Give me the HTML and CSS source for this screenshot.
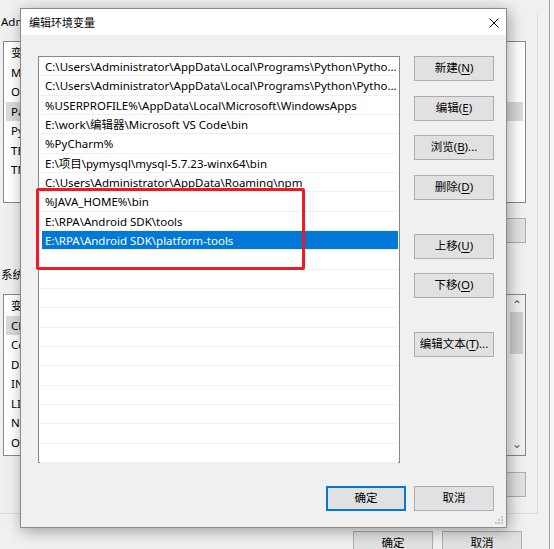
FILE: index.html
```html
<!DOCTYPE html>
<html lang="zh-CN">
<head>
	<meta charset="UTF-8">
	<title>编辑环境变量</title>
	<link rel="stylesheet" href="styles.css">
</head>
<body>

	<!-- 后面的"环境变量"窗口 -->
	<div class="owner">
		<div class="owner-frame">
			<div class="owner-label">Administrator 的用户变量(<u>U</u>)</div>
			<ul class="owner-list">
				<li class="owner-head">变量</li>
				<li>MOZ_PLUGIN_PATH</li>
				<li>OneDrive</li>
				<li class="active">Path</li>
				<li>PyCharm</li>
				<li>TEMP</li>
				<li>TMP</li>
			</ul>
			<div class="owner-btns">
				<button class="btn">新建(<u>N</u>)...</button>
				<button class="btn">编辑(<u>E</u>)...</button>
				<button class="btn">删除(<u>D</u>)</button>
			</div>
			<div class="owner-label sys">系统变量(<u>S</u>)</div>
			<div class="owner-list has-scroll">
				<ul>
					<li class="owner-head">变量</li>
					<li class="active">CLASSPATH</li>
					<li>ComSpec</li>
					<li>DriverData</li>
					<li>INCLUDE</li>
					<li>LIB</li>
					<li>NUMBER_OF_PROCESSORS</li>
					<li>OS</li>
				</ul>
				<div class="scrollbar">
					<span class="arrow">&#8963;</span>
					<span class="thumb"></span>
					<span class="arrow down">&#8964;</span>
				</div>
			</div>
			<div class="owner-btns">
				<button class="btn">新建(<u>W</u>)...</button>
				<button class="btn">编辑(<u>I</u>)...</button>
				<button class="btn">删除(<u>L</u>)</button>
			</div>
		</div>
		<div class="owner-foot">
			<button class="btn">确定</button>
			<button class="btn">取消</button>
		</div>
	</div>
	<div class="far-edge"></div>

	<!-- 编辑环境变量 对话框 -->
	<div class="dialog">
		<div class="titlebar">
			<span class="title">编辑环境变量</span>
			<svg class="close" width="10" height="10" viewBox="0 0 10 10">
				<path d="M0.5 0.5L9.5 9.5M9.5 0.5L0.5 9.5" stroke="#000" stroke-width="1"/>
			</svg>
		</div>
		<div class="dialog-body">
			<ul class="path-list">
				<li>C:\Users\Administrator\AppData\Local\Programs\Python\Pytho...</li>
				<li>C:\Users\Administrator\AppData\Local\Programs\Python\Pytho...</li>
				<li>%USERPROFILE%\AppData\Local\Microsoft\WindowsApps</li>
				<li>E:\work\编辑器\Microsoft VS Code\bin</li>
				<li>%PyCharm%</li>
				<li>E:\项目\pymysql\mysql-5.7.23-winx64\bin</li>
				<li>C:\Users\Administrator\AppData\Roaming\npm</li>
				<li>%JAVA_HOME%\bin</li>
				<li>E:\RPA\Android SDK\tools</li>
				<li class="selected">E:\RPA\Android SDK\platform-tools</li>
				<li></li><li></li><li></li><li></li><li></li><li></li>
				<li></li><li></li><li></li><li></li><li></li>
			</ul>
			<div class="side-btns">
				<button class="btn">新建(<u>N</u>)</button>
				<button class="btn">编辑(<u>E</u>)</button>
				<button class="btn">浏览(<u>B</u>)...</button>
				<button class="btn">删除(<u>D</u>)</button>
				<button class="btn group">上移(<u>U</u>)</button>
				<button class="btn">下移(<u>O</u>)</button>
				<button class="btn group">编辑文本(<u>T</u>)...</button>
			</div>
		</div>
		<div class="dialog-foot">
			<button class="btn default">确定</button>
			<button class="btn">取消</button>
		</div>
		<svg class="grip" width="8" height="8" viewBox="0 0 8 8">
			<rect x="6" y="0" width="2" height="2" fill="#c4c4c4"/>
			<rect x="3" y="3" width="2" height="2" fill="#c4c4c4"/>
			<rect x="6" y="3" width="2" height="2" fill="#c4c4c4"/>
			<rect x="0" y="6" width="2" height="2" fill="#c4c4c4"/>
			<rect x="3" y="6" width="2" height="2" fill="#c4c4c4"/>
			<rect x="6" y="6" width="2" height="2" fill="#c4c4c4"/>
		</svg>
	</div>

	<!-- 红框标注 -->
	<div class="mark"></div>

</body>
</html>
```

FILE: styles.css
```css
body{
	margin: 0;
	width: 554px;
	height: 549px;
	overflow: hidden;
	position: relative;
	background: #f0f0f0;
	font: 11px/1.4 "Noto Sans", "Noto Sans CJK SC", sans-serif;
	color: #000;
}
ul{
	list-style: none;
	margin: 0;
	padding: 0;
}
u{
	text-decoration: underline;
	text-underline-offset: 2px;
}
.btn{
	height: 25px;
	padding: 0;
	border: 1px solid #adadad;
	background: #e1e1e1;
	font: inherit;
	font-size: 11.5px;
	color: #000;
}

/* 后面的窗口 */
.owner-frame{
	width: 538px;
	box-sizing: border-box;
	padding: 0 11px 16px 3px;
	border-right: 1px solid #dcdcdc;
	border-bottom: 1px solid #dcdcdc;
}
.owner-label{
	margin: 14px 0 0 -2px;
	height: 16px;
	line-height: 16px;
	font-size: 11.5px;
	white-space: nowrap;
}
.owner-label.sys{
	margin-top: 24px;
}
.owner-list{
	margin-top: 11px;
	height: 162px;
	box-sizing: border-box;
	padding-top: 1px;
	border: 1px solid #828790;
	background: #fff;
	font-size: 11.5px;
}
.owner-list li{
	height: 19.5px;
	line-height: 19.5px;
	margin: 0 2px;
	padding-left: 5px;
}
.owner-list li.active{
	background: #d9d9d9;
}
.has-scroll{
	display: flex;
}
.has-scroll ul{
	flex: 1;
}
.scrollbar{
	width: 17px;
	margin-top: -1px;
	background: #f0f0f0;
	display: flex;
	flex-direction: column;
	align-items: center;
}
.scrollbar .arrow{
	height: 17px;
	line-height: 20px;
	font-size: 12px;
	color: #606060;
}
.scrollbar .arrow.down{
	margin-top: auto;
	line-height: 12px;
}
.scrollbar .thumb{
	width: 13px;
	height: 42px;
	background: #cdcdcd;
}
.owner-btns{
	margin-top: 15px;
	display: flex;
	justify-content: flex-end;
	gap: 8px;
}
.owner-btns .btn{
	width: 80px;
}
.owner-btns:last-child{
	margin-top: 16px;
}
.owner-foot{
	margin-top: 17px;
	width: 522px;
	display: flex;
	justify-content: flex-end;
	gap: 9px;
}
.owner-foot .btn{
	width: 80px;
}
.far-edge{
	position: absolute;
	left: 549px;
	top: 0;
	width: 4px;
	height: 549px;
	border-left: 1px solid #a0a0a0;
	background: #f7f7f7;
}

/* 对话框 */
.dialog{
	position: absolute;
	left: 20px;
	top: 8px;
	width: 487px;
	height: 520px;
	box-sizing: border-box;
	border: 1px solid #8a8a8a;
	background: #f0f0f0;
	box-shadow: 2px 3px 14px rgba(0, 0, 0, 0.35);
	display: flex;
	flex-direction: column;
}
.titlebar{
	height: 26px;
	background: #fff;
	display: flex;
	align-items: center;
	padding: 0 8px 0 8px;
}
.title{
	flex: 1;
	font-size: 11px;
	margin-top: 2px;
}
.close{
	margin-right: -1px;
	margin-top: 1px;
}
.dialog-body{
	display: flex;
	gap: 14px;
	padding: 21px 0 0 17px;
}
.path-list{
	width: 362px;
	height: 407px;
	box-sizing: border-box;
	border: 1px solid #828790;
	background: #fff;
	font-size: 11.5px;
}
.path-list li{
	height: 19.333px;
	box-sizing: border-box;
	margin: 0 1px 0 1px;
	padding-left: 5px;
	border-bottom: 1px solid #f0f0f0;
	line-height: 19px;
	white-space: nowrap;
}
.path-list li.selected{
	margin-left: 3px;
	padding-left: 3px;
	background: #0078d7;
	color: #fff;
}
.side-btns{
	width: 80px;
	display: flex;
	flex-direction: column;
}
.side-btns .btn{
	margin-top: 14.5px;
}
.side-btns .btn:first-child{
	margin-top: 0;
}
.side-btns .btn.group{
	margin-top: 34px;
}
.dialog-foot{
	margin-top: 23px;
	padding-right: 12px;
	display: flex;
	justify-content: flex-end;
	gap: 8px;
}
.dialog-foot .btn{
	width: 80px;
}
.dialog-foot .btn.default{
	border: 2px solid #0078d7;
}
.grip{
	position: absolute;
	right: 3px;
	bottom: 3px;
}

/* 红框 */
.mark{
	position: absolute;
	left: 36px;
	top: 188px;
	width: 263px;
	height: 76px;
	border: 3px solid #ec1c24;
	border-radius: 2px;
}
```
